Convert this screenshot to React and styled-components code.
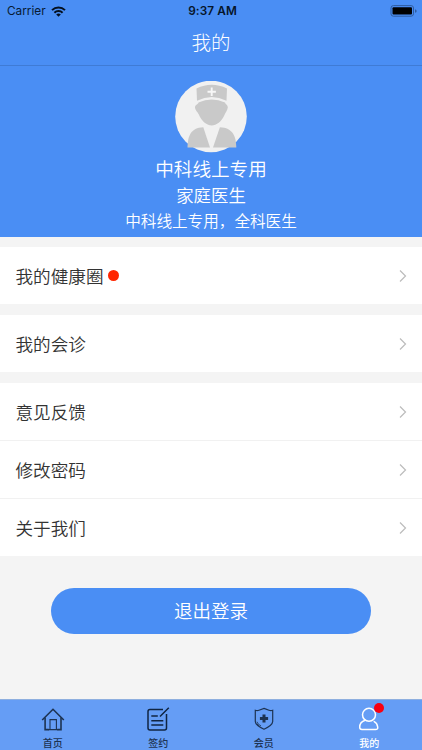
import React from "react";
import styled, { createGlobalStyle } from "styled-components";

const GlobalStyle = createGlobalStyle`
  * {
    box-sizing: border-box;
  }
  body {
    margin: 0;
    font-family: "Noto Sans CJK SC", sans-serif;
  }
`;

const Page = styled.main`
  display: flex;
  flex-direction: column;
  width: 422px;
  height: 750px;
  overflow: hidden;
  background: #f4f4f4;
`;

const StatusBar = styled.div`
  display: grid;
  grid-template-columns: 1fr auto 1fr;
  align-items: center;
  height: 22px;
  padding: 0 4px 0 7px;
  background: #4a8ef4;
  color: #071a33;
  font-family: Inter, sans-serif;
  font-size: 11.8px;
  line-height: 22px;
`;

const Carrier = styled.div`
  display: flex;
  align-items: center;
  gap: 5px;
`;

const Time = styled.span`
  font-weight: 600;
  font-size: 11.8px;
  letter-spacing: 0.1px;
  color: #06152b;
`;

const Battery = styled.svg`
  justify-self: end;
`;

const NavBar = styled.header`
  height: 44px;
  border-bottom: 1px solid #3f7bd5;
  background: #4a8ef4;
  color: #fff;
  font-size: 19.5px;
  font-weight: 300;
  line-height: 39px;
  text-align: center;
`;

const Profile = styled.section`
  display: flex;
  flex-direction: column;
  align-items: center;
  height: 171px;
  padding-top: 15px;
  background: #4a8ef4;
  color: #fff;
`;

const ProfileText = styled.div`
  height: ${(props) => props.$height}px;
  font-size: ${(props) => props.$size}px;
  font-weight: 350;
  line-height: ${(props) => props.$height}px;
  white-space: nowrap;
`;

const Group = styled.section`
  margin-top: ${(props) => props.$gap || 11}px;
  background: #fff;
`;

const Row = styled.div`
  display: flex;
  align-items: center;
  height: 57px;
  padding: 0 15px 0 15.5px;
  color: #333;
  font-size: 17.6px;
  font-weight: 350;

  & + & {
    height: 58px;
    border-top: 1px solid #f1f1f1;
  }
`;

const Dot = styled.span`
  width: 11px;
  height: 11px;
  margin-left: 5px;
  border-radius: 50%;
  background: #ff2600;
`;

const Chevron = styled.svg`
  margin-left: auto;
`;

const Logout = styled.button`
  flex: none;
  width: 320px;
  height: 46px;
  margin: 32px auto 0 51px;
  padding: 0 0 2px;
  border: 0;
  border-radius: 23px;
  background: #4a8ef4;
  color: #fff;
  font-family: inherit;
  font-size: 18.5px;
  font-weight: 350;
  line-height: 44px;
`;

const TabBar = styled.nav`
  display: grid;
  grid-template-columns: repeat(4, 1fr);
  height: 51px;
  margin-top: auto;
  border-top: 1px solid #8eafdf;
  background: #659df5;
`;

const Tab = styled.div`
  position: relative;
  display: flex;
  flex-direction: column;
  align-items: center;
  padding-top: 5px;
  color: ${(props) => (props.$active ? "#fff" : "#1d3352")};
  font-size: 10px;
  font-weight: 500;

  svg {
    flex: none;
  }
`;

const TabLabel = styled.span`
  height: 14px;
  margin-top: 5px;
  line-height: 14px;
`;

const Badge = styled.span`
  position: absolute;
  top: 3px;
  left: 57px;
  width: 10px;
  height: 10px;
  border-radius: 50%;
  background: #f90012;
`;

function WifiIcon() {
  return (
    <svg width="15" height="11" viewBox="0 0 15 11" fill="none" stroke="#04101f" strokeWidth="2">
      <path d="M1 4.1C4.7.5 10.3.5 14 4.1" />
      <path d="M3.4 6.7C5.7 4.5 9.3 4.5 11.6 6.7" />
      <path d="M5.2 8.4c1.3-1.2 3.3-1.2 4.6 0l-2.3 2.3z" fill="#04101f" stroke="none" />
    </svg>
  );
}

function Avatar() {
  return (
    <svg width="72" height="72" viewBox="0 0 72 72">
      <circle cx="36" cy="35.5" r="35.8" fill="#f1f1f1" />
      <g fill="#c9c9c9">
        <path d="M21.5 7.5Q36.7 0 52 7.5L51.5 19.7Q36.7 12.5 22 19.7Z" />
        <path d="M23.5 21.5Q36.7 15.5 50 21.5C50.5 23.3 53 24 52.8 26.5C52.5 29.5 50.5 31 49 35C46.8 40 41.5 44.5 36.7 44.5C32 44.5 26.7 40 24.5 35C23 31 20.2 29.5 20 26.5C19.8 24 23 23.3 23.5 21.5Z" />
        <path d="M28.3 46.2L35 66.5H12.5C12.8 55 15.5 46.8 28.3 46.2Z" />
        <path d="M44.9 46.2L38 66.5H61.3C61 55 57.8 46.8 44.9 46.2Z" />
      </g>
      <path d="M36.7 6.5v8.4M32.5 10.7h8.4" stroke="#f7f7f7" strokeWidth="1.9" />
    </svg>
  );
}

function HomeIcon() {
  return (
    <svg width="24" height="26" viewBox="0 0 24 26" fill="none" stroke="currentColor" strokeWidth="1.6">
      <path d="M1.2 15L12 4.3 22.8 15" />
      <path d="M4.1 12.5v12.1h3.7M20 12.5v12.1h-3.7" />
      <path d="M9 24.6v-10h6.4v10M7 24.6h10.2" strokeWidth="1.1" />
    </svg>
  );
}

function SignIcon() {
  return (
    <svg width="24" height="26" viewBox="0 0 24 26" fill="none" stroke="#102542" strokeWidth="1.5">
      <path d="M17 4.5H4Q2 4.5 2 6.5V23Q2 25 4 25H18.5Q20.5 25 20.5 23V9" />
      <path d="M5.3 11h6.5M5.3 15.7h12M5.3 20h12M14 11.5L22.8 2.8" />
    </svg>
  );
}

function MemberIcon() {
  return (
    <svg width="24" height="26" viewBox="0 0 24 26" fill="none" stroke="currentColor" strokeWidth="1.2">
      <path d="M12 3.4L17 5.2Q18.8 6 20.7 5.3V16.5Q20.5 20.4 12 24.2Q3.5 20.4 3.3 16.5V5.3Q5.2 6 7 5.2Z" />
      <path d="M12 9.4v8.2M7.9 13.5h8.2" strokeWidth="3" />
      <path d="M5 16.7Q5.6 19.5 9 20.9M5 19L7 20.9" strokeWidth=".8" />
    </svg>
  );
}

function UserIcon() {
  return (
    <svg width="24" height="26" viewBox="0 0 24 26" fill="none" stroke="currentColor" strokeWidth="1.5">
      <circle cx="12" cy="9.8" r="6.5" />
      <path d="M8.2 15.3C4.5 16.4 2.7 19 2.7 22.3Q2.7 24.5 5 24.5H18.6Q21.1 24.5 20.7 22Q20.2 18 17.2 16.6" strokeLinecap="round" />
    </svg>
  );
}

function MenuRow({ title, dot }) {
  return (
    <Row>
      <span>{title}</span>
      {dot ? <Dot /> : null}
      <Chevron width="8" height="14" viewBox="0 0 8 14" fill="none" stroke="#bcbcbc" strokeWidth="1.2">
        <path d="M1 1.5L6.5 7 1 12.5" />
      </Chevron>
    </Row>
  );
}

const tabs = [
  { label: "首页", Icon: HomeIcon },
  { label: "签约", Icon: SignIcon },
  { label: "会员", Icon: MemberIcon },
  { label: "我的", Icon: UserIcon, active: true },
];

function App() {
  return (
    <Page>
      <GlobalStyle />
      <StatusBar>
        <Carrier>
          Carrier
          <WifiIcon />
        </Carrier>
        <Time>9:37 AM</Time>
        <Battery width="28" height="12" viewBox="0 0 28 12">
          <rect x="1" y=".6" width="22.5" height="10.6" rx="2.4" fill="none" stroke="#2f5c9f" />
          <rect x="2.5" y="2.2" width="19.5" height="7.4" rx="1" fill="#000" />
          <path d="M25 4.2q1.7.4 1.7 1.8T25 7.8z" fill="#2f5c9f" />
        </Battery>
      </StatusBar>
      <NavBar>我的</NavBar>
      <Profile>
        <Avatar />
        <ProfileText $size={18.6} $height={29}>中科线上专用</ProfileText>
        <ProfileText $size={17.4} $height={25}>家庭医生</ProfileText>
        <ProfileText $size={15.6} $height={26}>中科线上专用，全科医生</ProfileText>
      </Profile>

      <Group $gap={10}>
        <MenuRow title="我的健康圈" dot />
      </Group>
      <Group>
        <MenuRow title="我的会诊" />
      </Group>
      <Group>
        <MenuRow title="意见反馈" />
        <MenuRow title="修改密码" />
        <MenuRow title="关于我们" />
      </Group>

      <Logout>退出登录</Logout>

      <TabBar>
        {tabs.map(({ label, Icon, active }) => (
          <Tab key={label} $active={active}>
            <Icon />
            {active ? <Badge /> : null}
            <TabLabel>{label}</TabLabel>
          </Tab>
        ))}
      </TabBar>
    </Page>
  );
}

export default App;
